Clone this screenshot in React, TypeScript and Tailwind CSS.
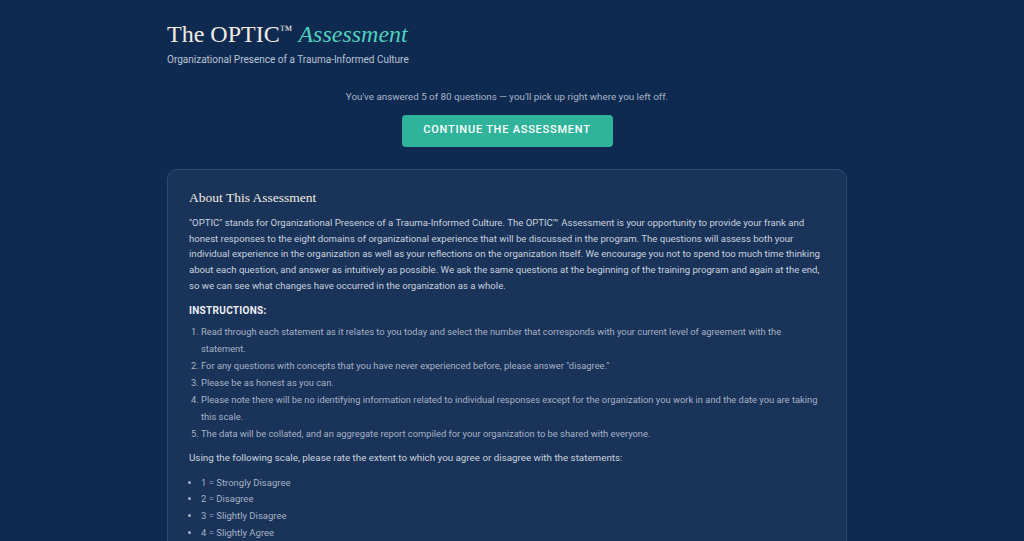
export default function App() {
  const steps = [
    'Read through each statement as it relates to you today and select the number that corresponds with your current level of agreement with the statement.',
    'For any questions with concepts that you have never experienced before, please answer "disagree."',
    'Please be as honest as you can.',
    'Please note there will be no identifying information related to individual responses except for the organization you work in and the date you are taking this scale.',
    'The data will be collated, and an aggregate report compiled for your organization to be shared with everyone.',
  ];
  const scale = ['1 = Strongly Disagree', '2 = Disagree', '3 = Slightly Disagree', '4 = Slightly Agree', '5 = Agree', '6 = Strongly Agree'];

  return (
    <div
      className="min-h-screen bg-[#0f2a50] text-white"
      style={{ fontFamily: 'Roboto, "Noto Sans", sans-serif' }}
    >
      <div className="w-[690px] pr-[10px] mx-auto pt-[13px] pb-10">
        <h1
          className="text-[24px] leading-[34px] text-[#f1ece2]"
          style={{ fontFamily: '"Liberation Serif", "DejaVu Serif", serif' }}
        >
          The OPTIC<span className="text-[13px] align-[8px]">™</span>{' '}
          <span className="italic text-[#4fd1bd]">Assessment</span>
        </h1>
        <p className="mt-[1px] text-[10px] text-[#b9c4d6]">Organizational Presence of a Trauma-Informed Culture</p>

        <div className="mt-[23px] flex flex-col items-center">
          <p className="text-[9.8px] text-[#a8b5c8]">You've answered 5 of 80 questions — you'll pick up right where you left off.</p>
          <button className="mt-[10px] w-[211px] h-[32px] rounded-[4px] bg-[#2fb49b] text-[11px] font-medium tracking-[0.07em] text-white">
            CONTINUE THE ASSESSMENT
          </button>
        </div>

        <div className="mt-[22px] rounded-[10px] border border-[#2d4a72] bg-[#1a3359] px-[21px] pt-[18px] pb-6">
          <h2
            className="text-[13.5px] text-[#f1ece2]"
            style={{ fontFamily: '"Liberation Serif", "DejaVu Serif", serif' }}
          >
            About This Assessment
          </h2>
          <p className="mt-[7px] text-[9.6px] leading-[15.75px] text-[#c9d2df]">
            "OPTIC" stands for Organizational Presence of a Trauma-Informed Culture. The OPTIC™ Assessment is your opportunity to provide your frank and honest responses to the eight domains of organizational experience that will be discussed in the program. The questions will assess both your individual experience in the organization as well as your reflections on the organization itself. We encourage you not to spend too much time thinking about each question, and answer as intuitively as possible. We ask the same questions at the beginning of the training program and again at the end, so we can see what changes have occurred in the organization as a whole.
          </p>
          <p className="mt-[9px] text-[10px] font-bold tracking-[0.03em] text-[#eef1f6]">INSTRUCTIONS:</p>
          <ol className="mt-[5px] list-decimal pl-[12px] text-[9.35px] leading-[17px] text-[#a6b2c4]">
            {steps.map((s) => (
              <li key={s}>{s}</li>
            ))}
          </ol>
          <p className="mt-[8px] text-[9.8px] leading-[16px] text-[#c9d2df]">
            Using the following scale, please rate the extent to which you agree or disagree with the statements:
          </p>
          <ul className="mt-[9px] list-disc pl-[12px] text-[9.5px] leading-[16.7px] text-[#a6b2c4]">
            {scale.map((s) => (
              <li key={s}>{s}</li>
            ))}
          </ul>
        </div>
      </div>
    </div>
  );
}
